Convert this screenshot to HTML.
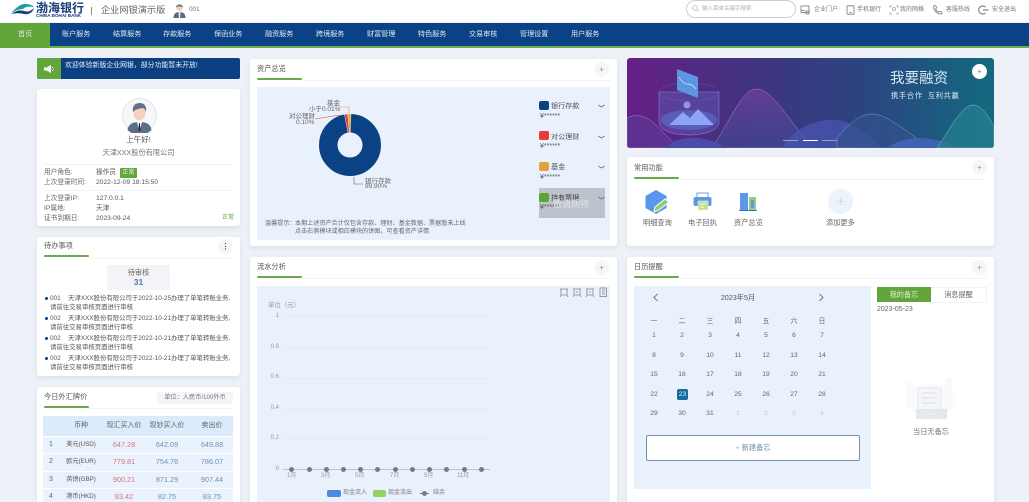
<!DOCTYPE html>
<html lang="zh"><head><meta charset="utf-8"><title>企业网银</title>
<style>
html,body{margin:0;padding:0;width:1029px;height:502px;overflow:hidden}
body{position:relative;background:#eef2f8;font-family:"Liberation Sans","Noto Sans CJK SC",sans-serif;color:#555;font-size:7.5px}
#w{left:0;top:0;width:1029px;height:502px;overflow:hidden;background:#eef2f8;filter:blur(.3px)}
div,span,svg{position:absolute;white-space:nowrap}
.card{background:#fff;border-radius:3px;box-shadow:0 2px 6px rgba(90,110,140,.14)}
.ttl{font-size:7.2px;color:#555;line-height:10px}
.gl{height:2px;background:#6aa84f;border-radius:1px}
.hl{height:1px;background:#f1f3f6}
.mv{width:15px;height:15px;border-radius:50%;background:#f5f6f8;color:#8a93a0;text-align:center;line-height:15px;font-size:8px}
.nav{top:23px;height:23px;line-height:23px;color:#dfe9f5;font-size:7.1px}
.tool{top:6px;font-size:6px;color:#777;line-height:9px}
.lb{left:44px;color:#666;font-size:6.7px;line-height:9px}
.vl{left:96px;color:#555;font-size:6.7px;line-height:9px}
.td{left:44px;font-size:6.4px;color:#555;line-height:10px}
.cur{font-size:7px;line-height:10px;text-align:center}
.r{color:#d9707a;font-size:7.3px}.b{color:#6f8fb5;font-size:7.3px}
.leg{left:539px;width:10px;height:9px;border-radius:2px}
.lt{left:551px;font-size:7.1px;color:#555;line-height:10px}
.ls{left:540px;font-size:7px;color:#555;line-height:8px}
.ch{left:598px}
.ax{color:#999;font-size:6px;line-height:8px}
.gr{left:283px;width:207px;height:1px;background:#e1eaf6}
.dot{top:467px;width:5px;height:5px;border-radius:50%;background:#747c8a}
.wk,.dn{width:20px;text-align:center;font-size:6.7px;color:#666;line-height:9px}
.dn.o{color:#c5ccd6}
.fn{top:218px;font-size:7.2px;color:#666;line-height:10px}
.pl{font-size:6.5px;line-height:7px;color:#666}
</style></head><body><div id="w">
<div style="left:0;top:0;width:1029px;height:22px;background:#fff"></div>
<svg style="left:11px;top:4px" width="24" height="12" viewBox="0 0 24 12"><path d="M0 9C5 4 9 0 14 0c4 0 7 1 9 3-6-1-9 0-11 2C8 5 4 7 0 9z" fill="#17a0a0"/><path d="M0 10c6-4 10-4 13-3 3 1 6 1 10-3-1 4-5 7-10 6-4-1-8-1-13 0z" fill="#0c3f82"/></svg>
<div style="left:36px;top:2px;font-size:12px;font-weight:bold;color:#143a78;line-height:12px">渤海银行</div>
<div style="left:36px;top:13px;font-size:4.6px;font-weight:bold;color:#143a78;line-height:5px">CHINA BOHAI BANK</div>
<div style="left:91px;top:7px;width:1px;height:8px;background:#888"></div>
<div style="left:101px;top:4px;font-size:9.2px;color:#666;line-height:13px">企业网银演示版</div>
<svg style="left:172px;top:3px" width="15" height="16" viewBox="0 0 15 16"><circle cx="7.5" cy="5" r="3.2" fill="#f3cdbb"/><path d="M4 4.5c0-4 7-4 7 0-2-1.5-5-1.5-7 0z" fill="#64728a"/><path d="M1.5 15c0-4 2-6 6-6s6 2 6 6z" fill="#5b6b85"/><path d="M6.5 9h2l-.4 6h-1.200z" fill="#eee"/></svg>
<div style="left:189px;top:5px;font-size:6.4px;color:#777;line-height:10px">001</div>

<div style="left:686px;top:0;width:108px;height:16px;border:1px solid #c9ced6;border-radius:9px;background:#fff"></div>
<svg style="left:692px;top:5px" width="7" height="7" viewBox="0 0 7 7"><circle cx="3" cy="3" r="2.3" fill="none" stroke="#aab" stroke-width=".7"/><path d="M5 5l1.500 1.500" stroke="#aab" stroke-width=".7"/></svg>
<div style="left:702px;top:5px;font-size:5.5px;color:#aab0ba;line-height:8px">输入菜单关键字搜索</div>
<svg style="left:800px;top:5px" width="10" height="10" viewBox="0 0 10 10" fill="none" stroke="#777" stroke-width=".8"><rect x="1" y="1" width="8" height="6.5"/><path d="M1 5.5h4M6 6h3v3H6z"/></svg>
<div class="tool" style="left:814px">企业门户</div>
<svg style="left:846px;top:5px" width="9" height="10" viewBox="0 0 9 10" fill="none" stroke="#777" stroke-width=".8"><rect x="1" y=".8" width="7" height="8.4" rx="1"/><path d="M3.5 7.5h2"/></svg>
<div class="tool" style="left:857px">手机银行</div>
<svg style="left:889px;top:5px" width="10" height="10" viewBox="0 0 10 10" fill="none" stroke="#999" stroke-width=".7"><path d="M1 3V1h2M7 1h2v2M9 7v2H7M3 9H1V7"/><circle cx="5" cy="4" r="1.5"/></svg>
<div class="tool" style="left:900px">我的网格</div>
<svg style="left:932px;top:4px" width="12" height="11" viewBox="0 0 12 11" fill="none" stroke="#777" stroke-width=".8"><path d="M2 1.5l2 .5.5 2L3.5 5c.8 1.500 1.800 2.500 3 3.200l1.200-1 2 .8.3 1.800c-4 1.200-9.500-3.500-8-8.300z"/></svg>
<div class="tool" style="left:946px">客服热线</div>
<svg style="left:978px;top:5px" width="11" height="10" viewBox="0 0 11 10" fill="none" stroke="#666" stroke-width=".9"><path d="M7.5 2.200A4 4 0 1 0 7.5 7.800M5 5h5.500"/></svg>
<div class="tool" style="left:992px">安全退出</div>

<div style="left:0;top:23px;width:1029px;height:23px;background:#0a4285"></div>
<div style="left:0;top:46px;width:1029px;height:2px;background:#6cab4e"></div>
<div style="left:0;top:23px;width:50px;height:25px;background:#62a53b"></div>
<div class="nav" style="left:18px">首页</div>
<div class="nav" style="left:62px">账户服务</div>
<div class="nav" style="left:113px">结算服务</div>
<div class="nav" style="left:163px">存款服务</div>
<div class="nav" style="left:214px">保函业务</div>
<div class="nav" style="left:265px">融资服务</div>
<div class="nav" style="left:316px">跨境服务</div>
<div class="nav" style="left:367px">财富管理</div>
<div class="nav" style="left:418px">特色服务</div>
<div class="nav" style="left:469px">交易审核</div>
<div class="nav" style="left:520px">管理设置</div>
<div class="nav" style="left:571px">用户服务</div>

<!-- notice -->
<div style="left:37px;top:58px;width:203px;height:21px;background:#0a3f82;border-radius:2px"></div>
<div style="left:37px;top:58px;width:24px;height:21px;background:#62a53b;border-radius:2px 0 0 2px"></div>
<svg style="left:44px;top:64px" width="11" height="10" viewBox="0 0 11 10"><path d="M0 3.500h2.500L7 1v8L2.500 6.500H0z" fill="#fff"/><path d="M8.500 3v1M8.500 6v1M10 5H9" stroke="#fff"/></svg>
<div style="left:65px;top:60px;font-size:6.9px;color:#eaf1fa;line-height:11px">欢迎体验新版企业网银，部分功能暂未开放!</div>

<!-- user card -->
<div class="card" style="left:37px;top:89px;width:203px;height:137px"></div>
<svg style="left:122px;top:98px" width="35" height="35" viewBox="0 0 35 35"><circle cx="17.5" cy="17.5" r="17" fill="#f5f7fb" stroke="#d8dce4" stroke-width=".7"/><path d="M5.5 32c1-6 5-8 12-8s11 2 12 8a17 17 0 0 1-24 0z" fill="#5d6d88"/><path d="M15 24h5l-2.500 9z" fill="#fff"/><path d="M17 25h1l.5 8h-2z" fill="#1e2a3c"/><ellipse cx="17.5" cy="15" rx="6" ry="7.5" fill="#f6d0be"/><path d="M11 14c-1-7 3-9 7-9s7 3 6 9c-1-3-2-4-4-4-3 1-7 1-9 4z" fill="#5f7088"/></svg>
<div style="left:37px;top:134px;width:203px;text-align:center;font-size:7.5px;line-height:11px;color:#555">上午好!</div>
<div style="left:37px;top:147px;width:203px;text-align:center;font-size:7.2px;line-height:11px;color:#777">天津XXX股份有限公司</div>
<div class="hl" style="left:44px;top:164px;width:189px"></div>
<div class="lb" style="top:168px">用户角色:</div><div class="vl" style="top:168px">操作员</div>
<div style="left:120px;top:168px;width:17px;height:10px;background:#62a53b;border-radius:1px;color:#e9f5e0;font-size:6px;line-height:10px;text-align:center">正常</div>
<div class="lb" style="top:178px">上次登录时间:</div><div class="vl" style="top:178px">2022-12-09 18:15:50</div>
<div class="hl" style="left:44px;top:190px;width:189px"></div>
<div class="lb" style="top:194px">上次登录IP:</div><div class="vl" style="top:194px">127.0.0.1</div>
<div class="lb" style="top:204px">IP属地:</div><div class="vl" style="top:204px">天津</div>
<div class="lb" style="top:214px">证书到期日:</div><div class="vl" style="top:214px">2023-09-24</div>
<div style="left:222px;top:214px;font-size:6px;color:#62a53b;line-height:9px">正常</div>

<!-- todo -->
<div class="card" style="left:37px;top:237px;width:203px;height:139px"></div>
<div class="ttl" style="left:44px;top:241px">待办事项</div>
<div class="gl" style="left:44px;top:255px;width:45px"></div>
<div class="hl" style="left:89px;top:258px;width:143px"></div>
<div class="mv" style="left:218px;top:239px;color:#555;font-weight:bold">⋮</div>
<div style="left:107px;top:265px;width:63px;height:25px;background:#f2f4f7;border-radius:2px"></div>
<div style="left:107px;top:267px;width:63px;text-align:center;font-size:7.2px;line-height:11px;color:#666">待审核</div>
<div style="left:107px;top:277px;width:63px;text-align:center;font-size:8.5px;font-weight:bold;color:#4d79ad;line-height:11px">31</div>
<div style="left:37px;top:237px;width:203px;height:133px;overflow:hidden">
<div style="left:8px;top:60px;width:3px;height:3px;border-radius:50%;background:#0a4285"></div>
<div class="td" style="left:13px;top:57px">001</div><div class="td" style="left:31px;top:57px">天津XXX股份有限公司于2022-10-25办理了单笔转账业务,</div>
<div class="td" style="left:13px;top:66px">请前往交易审核页面进行审核</div>
<div style="left:8px;top:80px;width:3px;height:3px;border-radius:50%;background:#0a4285"></div>
<div class="td" style="left:13px;top:77px">002</div><div class="td" style="left:31px;top:77px">天津XXX股份有限公司于2022-10-21办理了单笔转账业务,</div>
<div class="td" style="left:13px;top:86px">请前往交易审核页面进行审核</div>
<div style="left:8px;top:100px;width:3px;height:3px;border-radius:50%;background:#0a4285"></div>
<div class="td" style="left:13px;top:97px">002</div><div class="td" style="left:31px;top:97px">天津XXX股份有限公司于2022-10-21办理了单笔转账业务,</div>
<div class="td" style="left:13px;top:106px">请前往交易审核页面进行审核</div>
<div style="left:8px;top:120px;width:3px;height:3px;border-radius:50%;background:#0a4285"></div>
<div class="td" style="left:13px;top:117px">002</div><div class="td" style="left:31px;top:117px">天津XXX股份有限公司于2022-10-21办理了单笔转账业务,</div>
<div class="td" style="left:13px;top:126px">请前往交易审核页面进行审核</div>
</div>

<!-- fx -->
<div class="card" style="left:37px;top:387px;width:203px;height:120px"></div>
<div class="ttl" style="left:44px;top:392px">今日外汇牌价</div>
<div class="gl" style="left:44px;top:406px;width:45px"></div>
<div class="hl" style="left:89px;top:408px;width:143px"></div>
<div style="left:157px;top:392px;width:76px;height:12px;background:#f4f5f7;border-radius:2px;text-align:center;line-height:12px;font-size:6.2px;color:#777">单位：人民币/100外币</div>
<div style="left:43px;top:416px;width:190px;height:20px;background:#dcebfb"></div>
<div style="left:43px;top:437px;width:190px;height:16px;background:#eaf3fd"></div>
<div style="left:43px;top:454px;width:190px;height:17px;background:#eaf3fd"></div>
<div style="left:43px;top:472px;width:190px;height:16px;background:#eaf3fd"></div>
<div style="left:43px;top:489px;width:190px;height:13px;background:#eaf3fd"></div>
<div class="cur" style="left:56px;top:421px;width:50px;color:#566">币种</div>
<div class="cur" style="left:99px;top:421px;width:50px;color:#566">现汇买入价</div>
<div class="cur" style="left:142px;top:421px;width:50px;color:#566">现钞买入价</div>
<div class="cur" style="left:187px;top:421px;width:50px;color:#566">卖出价</div>
<div class="cur" style="left:44px;top:440px;width:14px;color:#667">1</div><div class="cur" style="left:56px;top:440px;width:50px;font-size:6.2px">美元(USD)</div><div class="cur r" style="left:99px;top:440px;width:50px">647.28</div><div class="cur b" style="left:142px;top:440px;width:50px">642.09</div><div class="cur b" style="left:187px;top:440px;width:50px">649.88</div>
<div class="cur" style="left:44px;top:457px;width:14px;color:#667">2</div><div class="cur" style="left:56px;top:457px;width:50px;font-size:6.2px">欧元(EUR)</div><div class="cur r" style="left:99px;top:457px;width:50px">779.81</div><div class="cur b" style="left:142px;top:457px;width:50px">754.76</div><div class="cur b" style="left:187px;top:457px;width:50px">786.07</div>
<div class="cur" style="left:44px;top:475px;width:14px;color:#667">3</div><div class="cur" style="left:56px;top:475px;width:50px;font-size:6.2px">英镑(GBP)</div><div class="cur r" style="left:99px;top:475px;width:50px">900.21</div><div class="cur b" style="left:142px;top:475px;width:50px">871.29</div><div class="cur b" style="left:187px;top:475px;width:50px">907.44</div>
<div class="cur" style="left:44px;top:492px;width:14px;color:#667">4</div><div class="cur" style="left:56px;top:492px;width:50px;font-size:6.2px">港币(HKD)</div><div class="cur r" style="left:99px;top:492px;width:50px">83.42</div><div class="cur b" style="left:142px;top:492px;width:50px">82.75</div><div class="cur b" style="left:187px;top:492px;width:50px">83.75</div>

<!-- assets -->
<div class="card" style="left:250px;top:59px;width:367px;height:187px"></div>
<div class="ttl" style="left:257px;top:64px">资产总览</div>
<div class="gl" style="left:257px;top:78px;width:45px"></div>
<div class="hl" style="left:302px;top:80px;width:308px"></div>
<div class="mv" style="left:594px;top:62px">+</div>
<div style="left:257px;top:87px;width:353px;height:153px;background:#e9f2fc"></div>
<svg style="left:310px;top:110px" width="80" height="72" viewBox="0 0 80 72"><circle cx="40" cy="35" r="21.75" fill="none" stroke="#0a4285" stroke-width="18.5"/><path d="M34.5 4.500L37.800 4 39.500 22.500 38 23z" fill="#e23b3b" stroke="#fff" stroke-width=".4"/><path d="M37.800 4h3.200L40.300 22.500H39.300z" fill="#e8a33d" stroke="#fff" stroke-width=".4"/></svg>
<svg style="left:257px;top:100px" width="120" height="90" viewBox="0 0 120 90" fill="none" stroke-width=".6"><path d="M82 7h10v7" stroke="#e8a33d"/><path d="M58 19l25-4" stroke="#e23b3b"/><path d="M97 77v7h9" stroke="#40608a"/></svg>
<div class="pl" style="left:327px;top:100px">基金</div>
<div class="pl" style="left:309px;top:106px">小于0.01%</div>
<div class="pl" style="left:289px;top:113px">对公理财</div>
<div class="pl" style="left:296px;top:119px">0.10%</div>
<div class="pl" style="left:365px;top:178px">银行存款</div>
<div class="pl" style="left:365px;top:183px">99.90%</div>
<div class="leg" style="top:101px;background:#0a4285"></div><div class="lt" style="top:101px">银行存款</div><div class="ls" style="top:113px">¥******</div>
<div class="leg" style="top:131px;background:#e8393b"></div><div class="lt" style="top:132px">对公理财</div><div class="ls" style="top:143px">¥******</div>
<div class="leg" style="top:162px;background:#e2a33f"></div><div class="lt" style="top:162px">基金</div><div class="ls" style="top:174px">¥******</div>
<div style="left:539px;top:188px;width:66px;height:30px;background:#bcc3cc"></div>
<div class="leg" style="top:193px;background:#5da52f"></div><div class="lt" style="top:193px;color:#444">持有票据</div><div class="ls" style="top:204px">¥******</div>
<div style="left:553px;top:199px;color:#dfe3e8;font-size:9px;line-height:11px">敬请期待</div>
<svg class="ch" style="top:104px" width="7" height="4" viewBox="0 0 7 4" fill="none" stroke="#51698a" stroke-width=".8"><path d="M.5 1C2 2 3 3 3.500 3S5 2 6.500 1"/></svg>
<svg class="ch" style="top:135px" width="7" height="4" viewBox="0 0 7 4" fill="none" stroke="#51698a" stroke-width=".8"><path d="M.5 1C2 2 3 3 3.500 3S5 2 6.500 1"/></svg>
<svg class="ch" style="top:165px" width="7" height="4" viewBox="0 0 7 4" fill="none" stroke="#51698a" stroke-width=".8"><path d="M.5 1C2 2 3 3 3.500 3S5 2 6.500 1"/></svg>
<svg class="ch" style="top:196px" width="7" height="4" viewBox="0 0 7 4" fill="none" stroke="#51698a" stroke-width=".8"><path d="M.5 1C2 2 3 3 3.500 3S5 2 6.500 1"/></svg>
<div style="left:265px;top:219px;font-size:6.1px;color:#667;line-height:9px">温馨提示：</div>
<div style="left:295px;top:219px;font-size:6.1px;color:#667;line-height:9px">本期上述资产合计仅包含存款、理财、基金数据、票据暂未上线</div>
<div style="left:295px;top:227px;font-size:6.1px;color:#667;line-height:9px">点击右侧模块或相应模块的饼图，可查看资产详情</div>

<!-- flow -->
<div class="card" style="left:250px;top:257px;width:367px;height:250px"></div>
<div class="ttl" style="left:257px;top:262px">流水分析</div>
<div class="gl" style="left:257px;top:276px;width:45px"></div>
<div class="hl" style="left:302px;top:278px;width:308px"></div>
<div class="mv" style="left:594px;top:260px">+</div>
<div style="left:257px;top:286px;width:353px;height:216px;background:#e9f2fc"></div>
<svg style="left:559px;top:287px" width="50" height="11" viewBox="0 0 50 11" fill="none" stroke="#7d8794" stroke-width=".8"><path d="M1 2h8M2 2v6h6V2M2 8l-1 2M8 8l1 2"/><path d="M14 2h8M15 2v6h6V2M15 8l-1 2M21 8l1 2M17 5h2"/><path d="M27 2h8M28 2v6h6V2M28 8l-1 2M34 8l1 2M30 5h2"/><rect x="41" y="1" width="6.5" height="8.5"/><path d="M43 3h3M43 5h3M43 7h3"/></svg>
<div class="ax" style="left:268px;top:302px;font-size:6.4px">单位（元）</div>
<div class="ax" style="left:273px;top:312px;width:6px;text-align:right">1</div>
<div class="ax" style="left:268px;top:343px;width:11px;text-align:right">0.8</div>
<div class="ax" style="left:268px;top:373px;width:11px;text-align:right">0.6</div>
<div class="ax" style="left:268px;top:404px;width:11px;text-align:right">0.4</div>
<div class="ax" style="left:268px;top:434px;width:11px;text-align:right">0.2</div>
<div class="ax" style="left:273px;top:465px;width:6px;text-align:right">0</div>
<div class="gr" style="top:316px"></div><div class="gr" style="top:347px"></div><div class="gr" style="top:378px"></div><div class="gr" style="top:409px"></div><div class="gr" style="top:438px"></div>
<div style="left:283px;top:469px;width:207px;height:1px;background:#bcc4cf"></div>
<div class="dot" style="left:289px"></div><div class="dot" style="left:306.500px"></div><div class="dot" style="left:323.500px"></div><div class="dot" style="left:340.500px"></div><div class="dot" style="left:358px"></div><div class="dot" style="left:375px"></div><div class="dot" style="left:392.500px"></div><div class="dot" style="left:409.500px"></div><div class="dot" style="left:426.500px"></div><div class="dot" style="left:444px"></div><div class="dot" style="left:461.500px"></div><div class="dot" style="left:478.500px"></div>
<div class="ax" style="left:287px;top:472px">1月</div><div class="ax" style="left:321px;top:472px">3月</div><div class="ax" style="left:355px;top:472px">5月</div><div class="ax" style="left:390px;top:472px">7月</div><div class="ax" style="left:424px;top:472px">9月</div><div class="ax" style="left:457px;top:472px">11月</div>
<div style="left:327px;top:490px;width:14px;height:7px;background:#4c8be0;border-radius:2px"></div>
<div style="left:343px;top:489px;font-size:6px;color:#778;line-height:9px">现金流入</div>
<div style="left:373px;top:490px;width:13px;height:7px;background:#8fd45f;border-radius:2px"></div>
<div style="left:388px;top:489px;font-size:6px;color:#778;line-height:9px">现金流出</div>
<div style="left:420px;top:493px;width:9px;height:1px;background:#747c8a"></div>
<div style="left:422px;top:491px;width:5px;height:5px;border-radius:50%;background:#747c8a"></div>
<div style="left:433px;top:489px;font-size:6px;color:#778;line-height:9px">结余</div>

<!-- banner -->
<div style="left:627px;top:58px;width:367px;height:90px;border-radius:3px;overflow:hidden;background:linear-gradient(90deg,#651f86 0%,#44317f 30%,#2a4580 65%,#136a80 100%)">
<svg style="left:0;top:0" width="367" height="90" viewBox="0 0 367 90">
<defs><linearGradient id="m" x1="0" y1="0" x2="0" y2="1"><stop offset="0" stop-color="#74409c" stop-opacity=".7"/><stop offset="1" stop-color="#3d4c9c" stop-opacity=".5"/></linearGradient></defs>
<path d="M85 90C105 60 115 31 130 31c16 0 38 40 55 59z" fill="url(#m)" stroke="#a78cc8" stroke-width=".5"/>
<path d="M155 90c10-18 30-28 50-28 20 0 35 14 50 28z" fill="#4752ab" fill-opacity=".85"/>
<path d="M210 80c15-18 25-24 35-24 14 0 30 14 58 34h-93z" fill="#33518d" fill-opacity=".7" stroke="#7f9fc2" stroke-width=".5"/>
<path d="M260 90c15-10 30-12 50-8 10 2 18 6 24 8z" fill="#3f63b0"/>
<path d="M310 90c15-22 25-43 36-43 9 0 16 12 21 22v21z" fill="#257e8e" fill-opacity=".75" stroke="#84bcc4" stroke-width=".5"/>
<path d="M0 60c10-5 20-2 30 8 8 8 15 16 22 22H0z" fill="#5c3592" fill-opacity=".8" stroke="#a985c8" stroke-width=".5"/>
<path d="M40 90c5-8 18-11 30-10 12 1 22 5 28 10z" fill="#4a4cab"/>
<path d="M32 34h60v30c0 8-13 13-30 13s-30-5-30-13z" fill="#5c55b0" fill-opacity=".55" stroke="#8a8fd8" stroke-width=".5"/>
<ellipse cx="62" cy="34" rx="30" ry="9" fill="none" stroke="#8a8fd8" stroke-width=".4" stroke-dasharray="1 1"/>
<ellipse cx="62" cy="62" rx="28" ry="10" fill="#5b68c8" fill-opacity=".7"/>
<path d="M42 67l14-13 7 6 8-9 16 16z" fill="#8da4f5"/>
<circle cx="60" cy="47" r="3.5" fill="#8f99e0"/>
<path d="M50 11l21 8v21l-21-8z" fill="#5c95e2"/><path d="M52 19c3 5 6 8 10 7 3 0 5 3 7 5" fill="none" stroke="#fff" stroke-width=".7" opacity=".8"/>
</svg>
<div style="left:263px;top:12px;font-size:14.5px;line-height:18px;color:#d8e8f2">我要融资</div>
<div style="left:264px;top:33px;font-size:7.3px;line-height:10px;color:#d8e8f2;letter-spacing:.6px">携手合作&nbsp; 互利共赢</div>
<div style="left:156px;top:82px;width:15px;height:1px;background:#8fa8c0"></div>
<div style="left:176px;top:82px;width:15px;height:1px;background:#fff"></div>
<div style="left:195px;top:82px;width:15px;height:1px;background:#8fa8c0"></div>
<div style="left:345px;top:6px;width:15px;height:15px;border-radius:50%;background:#fff;text-align:center;line-height:15px;color:#888;font-size:8px">+</div>
</div>

<!-- common -->
<div class="card" style="left:627px;top:157px;width:367px;height:89px"></div>
<div class="ttl" style="left:634px;top:163px">常用功能</div>
<div class="gl" style="left:634px;top:177px;width:45px"></div>
<div class="hl" style="left:679px;top:179px;width:308px"></div>
<div class="mv" style="left:972px;top:160px">+</div>
<svg style="left:644px;top:189px" width="26" height="26" viewBox="0 0 26 26"><path d="M12 1l10.500 6v12L12 25 1.500 19V7z" fill="#5b96ee"/><path d="M10 23l1-5 10-8 4 3-10 8z" fill="#8fcf67" stroke="#fff"/></svg>
<svg style="left:693px;top:192px" width="19" height="19" viewBox="0 0 19 19"><rect x="4" y="1" width="11" height="5" fill="#fff" stroke="#6c9ce0"/><rect x=".5" y="5" width="18" height="9" rx="2" fill="#5f97e2"/><rect x="5" y="9" width="10" height="9" fill="#b7e08f" stroke="#fff" stroke-width=".5"/><path d="M7 12h6M7 15h4" stroke="#fff"/></svg>
<svg style="left:739px;top:192px" width="18" height="19" viewBox="0 0 18 19"><rect x="1" y="1" width="8" height="17" fill="#5d98e8"/><rect x="10" y="5" width="7" height="13" fill="#93cf72"/><rect x="12" y="8" width="3" height="8" fill="#5d98e8"/><path d="M0 18.500h18" stroke="#3a73c0"/></svg>
<div style="left:828px;top:189px;width:25px;height:25px;border-radius:50%;background:#edf3fb;text-align:center;color:#cfdcee;font-size:14px;line-height:24px">+</div>
<div class="fn" style="left:643px">明细查询</div><div class="fn" style="left:688px">电子回执</div><div class="fn" style="left:734px">资产总览</div><div class="fn" style="left:826px">添加更多</div>

<!-- calendar -->
<div class="card" style="left:627px;top:257px;width:367px;height:250px"></div>
<div class="ttl" style="left:634px;top:262px">日历提醒</div>
<div class="gl" style="left:634px;top:276px;width:45px"></div>
<div class="hl" style="left:679px;top:278px;width:308px"></div>
<div class="mv" style="left:972px;top:260px">+</div>
<div style="left:634px;top:286px;width:237px;height:203px;background:#e9f2fc"></div>
<svg style="left:652px;top:293px" width="8" height="9" viewBox="0 0 8 9" fill="none" stroke="#556" stroke-width=".8"><path d="M5.500 1L2 4.500 5.500 8"/></svg>
<svg style="left:817px;top:293px" width="8" height="9" viewBox="0 0 8 9" fill="none" stroke="#556" stroke-width=".8"><path d="M2.500 1L6 4.500 2.500 8"/></svg>
<div style="left:700px;top:293px;width:76px;text-align:center;font-size:7.2px;color:#556;line-height:10px">2023年5月</div>
<div class="wk" style="left:644px;top:317px">一</div><div class="wk" style="left:672px;top:317px">二</div><div class="wk" style="left:700px;top:317px">三</div><div class="wk" style="left:728px;top:317px">四</div><div class="wk" style="left:756px;top:317px">五</div><div class="wk" style="left:784px;top:317px">六</div><div class="wk" style="left:812px;top:317px">日</div>
<div class="dn" style="left:644px;top:331px">1</div><div class="dn" style="left:672px;top:331px">2</div><div class="dn" style="left:700px;top:331px">3</div><div class="dn" style="left:728px;top:331px">4</div><div class="dn" style="left:756px;top:331px">5</div><div class="dn" style="left:784px;top:331px">6</div><div class="dn" style="left:812px;top:331px">7</div>
<div class="dn" style="left:644px;top:351px">8</div><div class="dn" style="left:672px;top:351px">9</div><div class="dn" style="left:700px;top:351px">10</div><div class="dn" style="left:728px;top:351px">11</div><div class="dn" style="left:756px;top:351px">12</div><div class="dn" style="left:784px;top:351px">13</div><div class="dn" style="left:812px;top:351px">14</div>
<div class="dn" style="left:644px;top:370px">15</div><div class="dn" style="left:672px;top:370px">16</div><div class="dn" style="left:700px;top:370px">17</div><div class="dn" style="left:728px;top:370px">18</div><div class="dn" style="left:756px;top:370px">19</div><div class="dn" style="left:784px;top:370px">20</div><div class="dn" style="left:812px;top:370px">21</div>
<div class="dn" style="left:644px;top:390px">22</div><div style="left:677px;top:389px;width:11px;height:11px;background:#1a6aa0;border-radius:2px;color:#dcecf8;text-align:center;font-size:6.7px;line-height:11px">23</div><div class="dn" style="left:700px;top:390px">24</div><div class="dn" style="left:728px;top:390px">25</div><div class="dn" style="left:756px;top:390px">26</div><div class="dn" style="left:784px;top:390px">27</div><div class="dn" style="left:812px;top:390px">28</div>
<div class="dn" style="left:644px;top:409px">29</div><div class="dn" style="left:672px;top:409px">30</div><div class="dn" style="left:700px;top:409px">31</div><div class="dn o" style="left:728px;top:409px">1</div><div class="dn o" style="left:756px;top:409px">2</div><div class="dn o" style="left:784px;top:409px">3</div><div class="dn o" style="left:812px;top:409px">4</div>
<div style="left:646px;top:435px;width:212px;height:24px;background:#fff;border:1px solid #7891ad;border-radius:2px;text-align:center;line-height:24px;font-size:7.2px;color:#6f8bab"><span style="position:static;color:#a9b4c2">+</span> 新建备忘</div>
<div style="left:877px;top:287px;width:54px;height:15px;background:#62a53b;text-align:center;line-height:15px;font-size:7.2px;color:#dff0d2">我的备忘</div>
<div style="left:931px;top:287px;width:55px;height:14px;border:1px solid #f0f1f3;border-left:0;text-align:center;line-height:14px;font-size:7.2px;color:#666">消息提醒</div>
<div style="left:877px;top:305px;font-size:7px;color:#666;line-height:10px">2023-05-23</div>
<svg style="left:902px;top:370px" width="58" height="50" viewBox="0 0 58 50"><ellipse cx="29" cy="30" rx="26" ry="16" fill="#f9fafb"/><rect x="5" y="12" width="7" height="26" fill="#f9fafb"/><rect x="43" y="8" width="7" height="30" fill="#f8f9fa"/><rect x="16" y="18" width="23" height="22" fill="#f5f6f8" stroke="#e4e6ea"/><path d="M20 23h15M20 28h15M20 33h15" stroke="#dcdfe4"/><rect x="14" y="39" width="31" height="10" fill="#e4e7eb"/><path d="M24 44h11" stroke="#f5f6f8"/></svg>
<div style="left:913px;top:427px;font-size:7.2px;color:#777;line-height:10px">当日无备忘</div>
</div></body></html>
